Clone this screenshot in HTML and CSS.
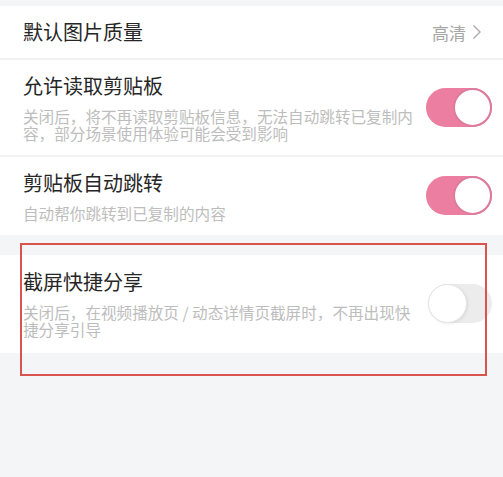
FILE: index.html
```html
<!DOCTYPE html>
<html lang="zh-CN">
<head>
<meta charset="utf-8">
<title>设置</title>
<link rel="stylesheet" href="styles.css">
</head>
<body>
<div class="page">
  <div class="group">
    <div class="row row--simple">
      <div class="title">默认图片质量</div>
      <div class="value">高清
        <svg class="chev" width="10" height="16" viewBox="0 0 10 16"><path d="M1.5 1.5 L8 8 L1.5 14.5" fill="none" stroke="#aaaaaa" stroke-width="1.4"/></svg>
      </div>
    </div>
    <div class="sep"></div>
    <div class="row">
      <div class="text">
        <div class="title">允许读取剪贴板</div>
        <div class="desc">关闭后，将不再读取剪贴板信息，无法自动跳转已复制内容，部分场景使用体验可能会受到影响</div>
      </div>
      <div class="toggle toggle--on"><span class="knob"></span></div>
    </div>
    <div class="sep"></div>
    <div class="row">
      <div class="text">
        <div class="title">剪贴板自动跳转</div>
        <div class="desc">自动帮你跳转到已复制的内容</div>
      </div>
      <div class="toggle toggle--on"><span class="knob"></span></div>
    </div>
  </div>
  <div class="group group--second">
    <div class="row row--last">
      <div class="text">
        <div class="title">截屏快捷分享</div>
        <div class="desc">关闭后，在视频播放页 / 动态详情页截屏时，不再出现快捷分享引导</div>
      </div>
      <div class="toggle toggle--off"><span class="knob"></span></div>
    </div>
  </div>
  <div class="highlight"></div>
</div>
</body>
</html>
```

FILE: styles.css
```css
* { box-sizing: border-box; }
html, body {
  margin: 0;
  padding: 0;
  background: #f4f5f7;
}
body {
  font-family: "Noto Sans CJK SC", "Noto Sans", sans-serif;
  width: 503px;
  height: 477px;
  overflow: hidden;
}
.page {
  position: relative;
  padding-top: 6px;
  height: 477px;
}
.group {
  background: #ffffff;
}
.group--second {
  margin-top: 20px;
}
.sep {
  height: 2px;
  background: #f3f3f4;
}
.row {
  display: flex;
  align-items: center;
  justify-content: space-between;
  padding: 12px 11px 13px 23px;
}
.row--simple {
  height: 52px;
  padding-top: 0;
  padding-bottom: 0;
  padding-right: 21px;
}
.row--last {
  padding-top: 13px;
  padding-bottom: 15px;
}
.text {
  width: 398px;
}
.title {
  font-size: 20px;
  line-height: 28px;
  color: #262626;
}
.desc {
  margin-top: 8px;
  font-size: 15.6px;
  line-height: 17px;
  color: #bdbdbd;
}
.value {
  display: flex;
  align-items: center;
  gap: 6px;
  font-size: 17px;
  color: #a6a6a6;
}
.chev { display: block; }
.toggle {
  position: relative;
  width: 66px;
  height: 39px;
  border-radius: 20px;
  flex: none;
}
.toggle--on {
  background: #ec7fa1;
}
.toggle--off {
  background: #ececec;
  width: 64px;
}
.knob {
  position: absolute;
  top: 0;
  width: 39px;
  height: 39px;
  border-radius: 50%;
  background: #ffffff;
}
.toggle--on .knob {
  right: 0;
  border: 2px solid #dd7c9c;
}
.toggle--off .knob {
  left: 0;
  border: 1px solid #e4e4e4;
  box-shadow: 1px 1px 3px rgba(0,0,0,0.08);
}
.highlight {
  position: absolute;
  left: 20px;
  top: 243px;
  width: 467px;
  height: 133px;
  border: 2px solid #d9534f;
  pointer-events: none;
}
```
